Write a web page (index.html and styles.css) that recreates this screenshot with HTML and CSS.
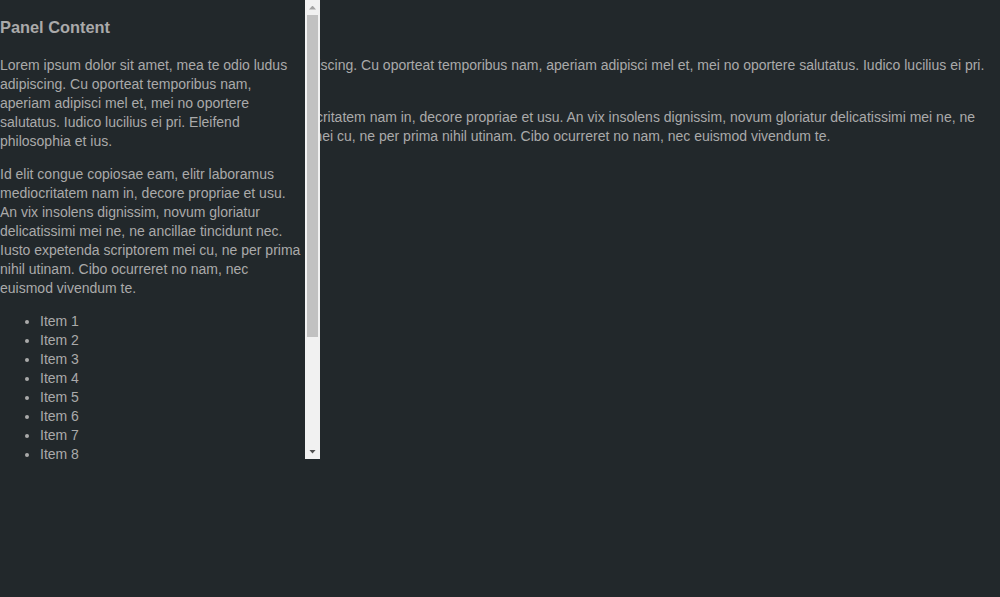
FILE: index.html
```html
<!DOCTYPE html>
<html>
<head>
<meta charset="utf-8">
<link rel="stylesheet" href="styles.css">
</head>
<body>
<div class="main">
  <h3>Panel Content</h3>
  <p>Lorem ipsum dolor sit amet, mea te odio ludus adipiscing. Cu oporteat temporibus nam, aperiam adipisci mel et, mei no oportere salutatus. Iudico lucilius ei pri. Eleifend philosophia et ius.</p>
  <p>Id elit congue copiosae eam, elitr laboramus mediocritatem nam in, decore propriae et usu. An vix insolens dignissim, novum gloriatur delicatissimi mei ne, ne ancillae tincidunt nec. Iusto expetenda scriptorem mei cu, ne per prima nihil utinam. Cibo ocurreret no nam, nec euismod vivendum te.</p>
</div>
<div class="panel">
  <div class="panel-body">
    <h3>Panel Content</h3>
    <p>Lorem ipsum dolor sit amet, mea te odio ludus adipiscing. Cu oporteat temporibus nam, aperiam adipisci mel et, mei no oportere salutatus. Iudico lucilius ei pri. Eleifend philosophia et ius.</p>
    <p>Id elit congue copiosae eam, elitr laboramus mediocritatem nam in, decore propriae et usu. An vix insolens dignissim, novum gloriatur delicatissimi mei ne, ne ancillae tincidunt nec. Iusto expetenda scriptorem mei cu, ne per prima nihil utinam. Cibo ocurreret no nam, nec euismod vivendum te.</p>
    <ul>
      <li>Item 1</li>
      <li>Item 2</li>
      <li>Item 3</li>
      <li>Item 4</li>
      <li>Item 5</li>
      <li>Item 6</li>
      <li>Item 7</li>
      <li>Item 8</li>
      <li>Item 9</li>
      <li>Item 10</li>
    </ul>
  </div>
  <div class="scrollbar" aria-hidden="true">
    <div class="sb-btn"><span class="arrow arrow-up"></span></div>
    <div class="sb-track"><div class="sb-thumb"></div></div>
    <div class="sb-btn"><span class="arrow arrow-down"></span></div>
  </div>
</div>
</body>
</html>
```
FILE: styles.css
```css
html, body {
  margin: 0;
  padding: 0;
  background: #22282b;
}
body {
  font-family: "Liberation Sans", Arial, sans-serif;
  font-size: 14px;
  line-height: 19px;
  color: #aaaaaa;
  height: 597px;
  overflow: hidden;
}
h3 {
  font-size: 1.17em;
  line-height: 23px;
  margin: 1em 0;
  font-weight: bold;
}
p {
  margin: 14px 0;
}
ul {
  margin: 14px 0;
  padding-left: 40px;
}
.panel {
  position: absolute;
  top: 0;
  left: 0;
  width: 320px;
  height: 459px;
  display: flex;
  background: #22282b;
}
.panel-body {
  flex: 1;
  min-width: 0;
  overflow: hidden;
}
.scrollbar {
  width: 15px;
  flex: none;
  display: flex;
  flex-direction: column;
  background: #f1f1f1;
}
.sb-btn {
  height: 15px;
  flex: none;
  display: flex;
  align-items: center;
  justify-content: center;
}
.arrow {
  display: block;
  width: 7px;
  height: 4px;
}
.arrow-up {
  background: #a3a3a3;
  clip-path: polygon(50% 0, 100% 100%, 0 100%);
}
.arrow-down {
  background: #505050;
  clip-path: polygon(0 0, 100% 0, 50% 100%);
}
.sb-track {
  flex: 1;
  padding: 0 2px;
}
.sb-thumb {
  height: 322px;
  background: #c1c1c1;
}
```
